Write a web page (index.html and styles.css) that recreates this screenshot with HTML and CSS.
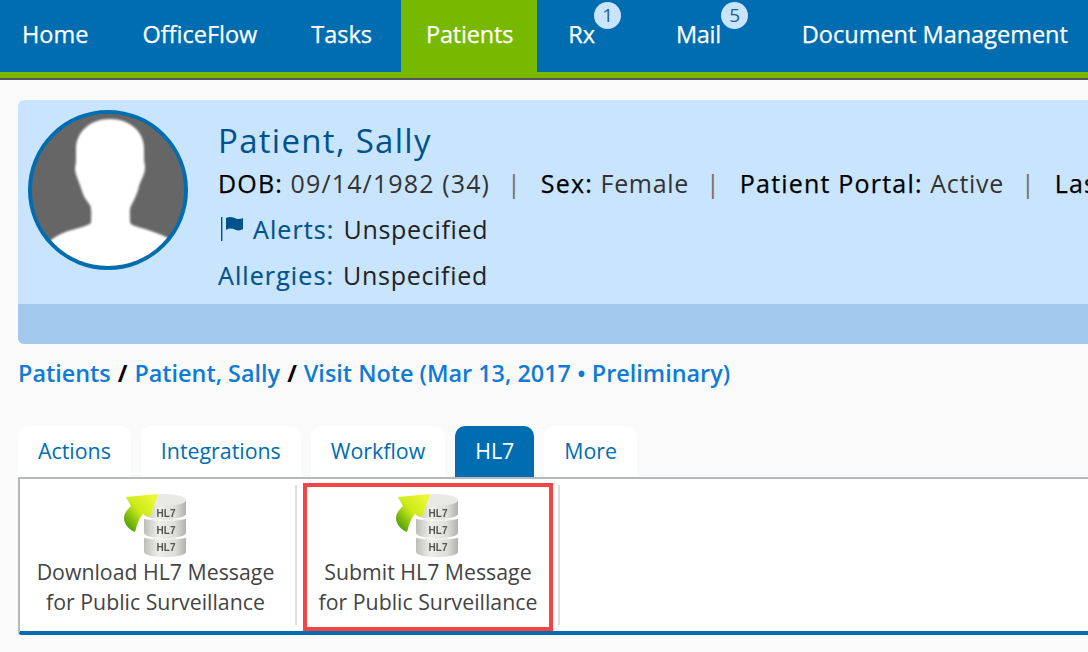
FILE: index.html
```html
<!DOCTYPE html>
<html lang="en">
<head>
<meta charset="utf-8">
<title>Patient, Sally</title>
<link rel="stylesheet" href="styles.css">
</head>
<body>
<header class="topbar">
  <nav class="nav">
    <a class="nav-item nav-home">Home</a>
    <a class="nav-item nav-flow">OfficeFlow</a>
    <a class="nav-item nav-tasks">Tasks</a>
    <a class="nav-item nav-patients">Patients</a>
    <a class="nav-item nav-rx">Rx<span class="badge">1</span></a>
    <a class="nav-item nav-mail">Mail<span class="badge">5</span></a>
    <a class="nav-item nav-docs">Document Management</a>
  </nav>
</header>
<main class="page">
  <section class="patient">
    <div class="patient-main">
      <svg class="avatar" viewBox="0 0 160 160" aria-hidden="true">
        <defs>
          <clipPath id="avatar-clip"><circle cx="80" cy="80" r="76"/></clipPath>
          <filter id="soft" x="-10%" y="-10%" width="120%" height="120%"><feGaussianBlur stdDeviation="0.9"/></filter>
        </defs>
        <circle cx="80" cy="80" r="78" fill="#666666" stroke="#006db0" stroke-width="4"/>
        <g clip-path="url(#avatar-clip)">
          <path filter="url(#soft)" fill="#ffffff" d="M82 9C62 9 48 22 48 39L48 50C48 54 47 56 47 60C48 66 51 72 53 78C55 86 58 90 62 95C64 100 63 108 63 113C60 116 50 118 40 121C32 124 26 127 22 131L20 170L142 170L140 128C132 124 122 120 110 117C104 115 102 114 102 111C102 104 101 98 104 94C107 88 110 82 111 76C113 70 117 64 117 58C117 54 116 52 116 48L116 38C116 22 102 9 82 9Z"/>
        </g>
      </svg>
      <div class="patient-info">
        <h1 class="patient-name">Patient, Sally</h1>
        <p class="demo">
          <b>DOB:</b> <span class="date">09/14/1982 (34)</span><span class="sep">|</span><b>Sex:</b> <span class="val">Female</span><span class="sep">|</span><b>Patient Portal:</b> <span class="val">Active</span><span class="sep">|</span><b>Last Seen:</b> Mar 13, 2017
        </p>
        <p class="clinical clinical-alerts">
          <svg class="flag" viewBox="0 0 24 28" aria-hidden="true"><path d="M1 2H2.400V26H1Z" fill="#00528c"/><path d="M6 3C10 1 13 2 16 3.500C18.500 4.500 21 4 23 3V14C21 15.500 18 15.800 15.500 14.800C12 13.200 9.500 13 6 15Z" fill="#00528c"/></svg>
          <span class="label">Alerts:</span> <span class="val">Unspecified</span>
        </p>
        <p class="clinical"><span class="label">Allergies:</span> <span class="val">Unspecified</span></p>
      </div>
    </div>
    <div class="patient-band"></div>
  </section>

  <nav class="crumbs">
    <a>Patients</a><span class="slash">/</span><a>Patient, Sally</a><span class="slash">/</span><a>Visit Note (Mar 13, 2017 • Preliminary)</a>
  </nav>

  <div class="tabs">
    <a class="tab">Actions</a>
    <a class="tab">Integrations</a>
    <a class="tab">Workflow</a>
    <a class="tab tab-hl7">HL7</a>
    <a class="tab">More</a>
  </div>

  <section class="toolbar">
    <a class="tool tool-download">
      <svg class="tool-icon" viewBox="0 0 64 64" aria-hidden="true">
        <defs>
          <linearGradient id="metal" x1="0" y1="0" x2="1" y2="0">
            <stop offset="0" stop-color="#bdbeba"/><stop offset="0.35" stop-color="#efefec"/><stop offset="0.75" stop-color="#dcdcd9"/><stop offset="1" stop-color="#b0b1ae"/>
          </linearGradient>
          <linearGradient id="arrow" x1="1" y1="0" x2="0" y2="1">
            <stop offset="0" stop-color="#f4fb3c"/><stop offset="0.5" stop-color="#cdea18"/><stop offset="0.8" stop-color="#6cb00a"/><stop offset="1" stop-color="#3f8c06"/>
          </linearGradient>
          <filter id="icon-soft" x="-5%" y="-5%" width="110%" height="110%"><feGaussianBlur stdDeviation="0.45"/></filter>
          <symbol id="hl7-icon" viewBox="0 0 64 64">
            <g filter="url(#icon-soft)">
              <path fill="url(#metal)" d="M20 45H62V59C62 62 52 64 41 64C30 64 20 62 20 59Z"/>
              <path fill="url(#metal)" d="M20 26H62V40C62 43 52 45 41 45C30 45 20 43 20 40Z"/>
              <path fill="url(#metal)" d="M20 7H62V21C62 24 52 26 41 26C30 26 20 24 20 21Z"/>
              <ellipse cx="41" cy="7" rx="21" ry="6" fill="#e9e9e6"/>
              <path fill="none" stroke="#fafaf8" stroke-width="1" d="M20 25C22 28 60 28 62 25M20 44C22 47 60 47 62 44"/>
              <text class="icon-text" x="42" y="24">HL7</text>
              <text class="icon-text" x="42" y="41">HL7</text>
              <text class="icon-text" x="42" y="58">HL7</text>
              <path fill="url(#arrow)" d="M2 4L34 1L26 24L19 21C15 25 13 32 11 39C5 37 0 31 0 25C0 20 4 16 7 13Z"/>
            </g>
          </symbol>
        </defs>
        <use href="#hl7-icon"/>
      </svg>
      <span class="tool-label">Download HL7 Message<br>for Public Surveillance</span>
    </a>
    <span class="divider"></span>
    <a class="tool tool-submit">
      <svg class="tool-icon" viewBox="0 0 64 64" aria-hidden="true"><use href="#hl7-icon"/></svg>
      <span class="tool-label">Submit HL7 Message<br>for Public Surveillance</span>
    </a>
    <span class="divider divider-end"></span>
  </section>
</main>
</body>
</html>
```
FILE: styles.css
```css
* { box-sizing: border-box; }
html, body { margin: 0; height: 100%; }
body {
  width: 1088px;
  height: 652px;
  overflow: hidden;
  background: #fafafa;
  font-family: "Open Sans", "Liberation Sans", sans-serif;
}
p, h1 { margin: 0; font-weight: 400; }

.topbar {
  height: 80px;
  background: #006db0;
  border-bottom: 2px solid #555555;
}
.nav {
  display: flex;
  height: 78px;
  border-bottom: 6px solid #77b800;
  white-space: nowrap;
}
.nav-item {
  position: relative;
  height: 72px;
  color: #ffffff;
  font-size: 23.5px;
  line-height: 68px;
  -webkit-text-stroke: 0.25px #ffffff;
}
.nav-home { padding: 0 27px 0 22px; }
.nav-flow { padding: 0 27px; }
.nav-tasks { padding: 0 29px 0 27px; }
.nav-patients { padding: 0 24px 0 25px; background: #77b800; letter-spacing: -0.2px; }
.nav-rx { padding: 0 41px 0 31px; }
.nav-mail { padding: 0 41px 0 40px; letter-spacing: -0.3px; }
.nav-docs { padding-left: 40px; }
.badge {
  position: absolute;
  top: 2px;
  width: 27px;
  height: 27px;
  border-radius: 50%;
  background: #c9e4fd;
  color: #1d5f95;
  font-size: 19px;
  line-height: 27px;
  text-align: center;
  -webkit-text-stroke: 0;
}
.nav-rx .badge { left: 57px; }
.nav-mail .badge { left: 85px; }

.page { padding: 20px 0 0 18px; }

.patient {
  height: 244px;
  width: 1090px;
  border-radius: 6px 0 0 6px;
  background: #c9e4fd;
  display: flex;
  flex-direction: column;
  overflow: hidden;
}
.patient-main {
  display: flex;
  flex: 1;
  padding: 10px 0 0 10px;
  min-height: 0;
}
.avatar { flex: none; width: 160px; height: 160px; }
.patient-info { margin-left: 30px; min-width: 0; white-space: nowrap; }
.patient-name {
  margin-top: 9px;
  color: #00528c;
  font-size: 33px;
  letter-spacing: 1.3px;
  line-height: 44px;
}
.demo {
  color: #333333;
  font-size: 25px;
  letter-spacing: 1px;
  line-height: 40px;
}
.demo b {
  color: #000000;
  font-weight: 500;
  letter-spacing: 1.2px;
  -webkit-text-stroke: 0.25px #000000;
}
.date { letter-spacing: 1.13px; }
.val { letter-spacing: 0.7px; }
.sep { margin: 0 19px 0 17px; color: #7a6a6a; font-weight: 400; }
.clinical {
  display: flex;
  gap: 9px;
  align-items: center;
  color: #222222;
  font-size: 25px;
  letter-spacing: 1.1px;
  line-height: 46px;
}
.clinical-alerts { margin-top: 3px; }
.label { color: #00528c; -webkit-text-stroke: 0.2px #00528c; }
.flag { width: 24px; height: 28px; margin-left: 2px; }
.patient-band { height: 40px; flex: none; background: #a3c9ee; }

.crumbs {
  margin-top: 11px;
  color: #000000;
  font-size: 23.4px;
  font-weight: 600;
  line-height: 36px;
}
.crumbs a { color: #0f7bd6; }
.slash { margin: 0 7px; font-weight: 700; }

.tabs {
  display: flex;
  gap: 10px;
  margin-top: 35px;
  height: 51px;
}
.tab {
  height: 51px;
  padding: 0 20px;
  border-radius: 10px 10px 0 0;
  background: #ffffff;
  color: #006db0;
  font-size: 21.35px;
  line-height: 49px;
  white-space: nowrap;
}
.tab-hl7 { background: #006db0; color: #ffffff; }

.toolbar {
  display: flex;
  align-items: flex-start;
  width: 1072px;
  height: 158px;
  padding-top: 4px;
  background: #ffffff;
  border-top: 2px solid #b5b8bc;
  border-left: 2px solid #b5b8bc;
  border-bottom: 4px solid #006db0;
  border-radius: 0 0 0 4px;
}
.tool {
  display: flex;
  flex-direction: column;
  align-items: center;
  flex: none;
  color: #444444;
  font-size: 21.3px;
  line-height: 30px;
  text-align: center;
  white-space: nowrap;
}
.tool-download { width: 275px; padding: 10px 4px 0 0; }
.tool-submit {
  width: 250px;
  height: 148px;
  margin-left: 6px;
  padding-top: 6px;
  border: 4px solid #f44444;
}
.tool-icon { width: 64px; height: 64px; }
.icon-text {
  font-family: "Liberation Sans", sans-serif;
  font-size: 10px;
  font-weight: 700;
  fill: #555555;
  text-anchor: middle;
}
.divider {
  flex: none;
  width: 2px;
  height: 140px;
  margin-top: 2px;
  background: #dddddd;
}
.divider-end { margin-left: 5px; }
```
